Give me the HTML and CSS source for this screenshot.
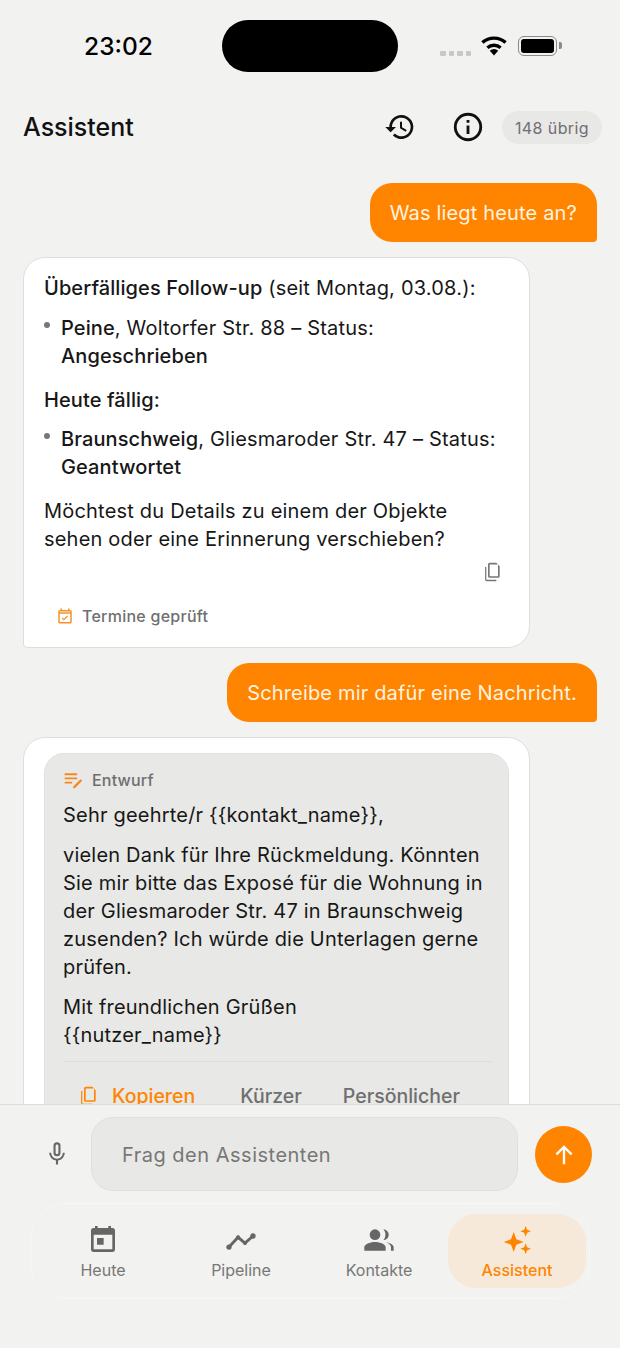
FILE: index.html
```html
<!DOCTYPE html>
<html lang="de">
<head>
  <meta charset="UTF-8">
  <meta name="viewport" content="width=device-width, initial-scale=1">
  <title>Assistent</title>
  <link rel="stylesheet" href="styles.css">
</head>
<body>

<div class="screen">
  <div class="status-bar">
    <span class="clock">23:02</span>
    <div class="island"></div>
    <div class="status-icons">
      <div class="signal"><i></i><i></i><i></i><i></i></div>
      <svg class="wifi" width="28" height="20" viewBox="0 0 28 20"><path d="M14 19.500l-4.200-4.800a6.200 6.200 0 0 1 8.400 0z" fill="#000"/><path d="M7.400 11.700a10 10 0 0 1 13.200 0M2.400 6.600a17.200 17.200 0 0 1 23.200 0" fill="none" stroke="#000" stroke-width="3.400"/></svg>
      <div class="battery"><div class="battery-fill"></div></div>
    </div>
  </div>

  <div class="top-bar">
    <h1>Assistent</h1>
    <svg class="top-icon history" width="32" height="32" viewBox="0 0 24 24"><path d="M13 3a9 9 0 0 0-9 9H1l3.900 3.900.1.100 4-4H6a7 7 0 1 1 2.050 4.950l-1.420 1.420A9 9 0 1 0 13 3zm-1 5v5l4.250 2.520.77-1.280-3.520-2.090V8z" fill="#111"/></svg>
    <svg class="top-icon info" width="34" height="34" viewBox="0 0 24 24"><path d="M11 7h2v2h-2zm0 4h2v6h-2zm1-9a10 10 0 1 0 0 20 10 10 0 0 0 0-20zm0 18a8 8 0 1 1 0-16 8 8 0 0 1 0 16z" fill="#111"/></svg>
    <span class="quota">148 übrig</span>
  </div>

  <div class="chat">
    <div class="msg-user">Was liegt heute an?</div>

    <div class="msg-bot">
      <p><b>Überfälliges Follow-up</b> (seit Montag, 03.08.):</p>
      <ul>
        <li><b>Peine</b>, Woltorfer Str. 88 – Status: <b>Angeschrieben</b></li>
      </ul>
      <p class="tight"><b>Heute fällig:</b></p>
      <ul>
        <li><b>Braunschweig</b>, Gliesmaroder Str. 47 – Status: <b>Geantwortet</b></li>
      </ul>
      <p class="last">Möchtest du Details zu einem der Objekte sehen oder eine Erinnerung verschieben?</p>
      <div class="copy-row">
        <svg width="20" height="20" viewBox="0 0 24 24"><path d="M16 1H8a2 2 0 0 0-2 2v14a2 2 0 0 0 2 2h10a2 2 0 0 0 2-2V5zm2 16H8V3h10zM4 6H2.500v15a2 2 0 0 0 2 2H16v-1.600H4.500a.5.5 0 0 1-.5-.5z" fill="#777"/></svg>
      </div>
      <div class="tool-note">
        <svg width="18" height="18" viewBox="0 0 24 24"><path d="M19 4h-1V2h-2v2H8V2H6v2H5a2 2 0 0 0-2 2v14a2 2 0 0 0 2 2h14a2 2 0 0 0 2-2V6a2 2 0 0 0-2-2zm0 16H5V9h14zm0-13H5V6h14zm-8.500 11l-3-3 1.100-1.100 1.900 1.900 4.400-4.400 1.100 1.100z" fill="#f5922a"/></svg>
        Termine geprüft
      </div>
    </div>

    <div class="msg-user">Schreibe mir dafür eine Nachricht.</div>

    <div class="msg-bot msg-draft">
      <div class="draft">
        <div class="draft-head">
          <svg width="20" height="20" viewBox="0 0 24 24"><path d="M2 4h15v2.200H2zm0 5h15v2.200H2zm0 5h9v2.200H2zM21 11l2 2-8.500 8.500-2.500.5.500-2.500z" fill="#f5881f"/></svg>
          Entwurf
        </div>
        <p>Sehr geehrte/r {{kontakt_name}},</p>
        <p>vielen Dank für Ihre Rückmeldung. Könnten Sie mir bitte das Exposé für die Wohnung in der Gliesmaroder Str. 47 in Braunschweig zusenden? Ich würde die Unterlagen gerne prüfen.</p>
        <p>Mit freundlichen Grüßen<br>{{nutzer_name}}</p>
        <div class="draft-actions">
          <span class="action action-on">
            <svg width="20" height="20" viewBox="0 0 24 24"><path d="M16 1H8a2 2 0 0 0-2 2v14a2 2 0 0 0 2 2h10a2 2 0 0 0 2-2V5zm2 16H8V3h10zM4 6H2.500v15a2 2 0 0 0 2 2H16v-1.600H4.500a.5.5 0 0 1-.5-.5z" fill="#ff8500"/></svg>
            Kopieren
          </span>
          <span class="action">Kürzer</span>
          <span class="action">Persönlicher</span>
        </div>
      </div>
    </div>
  </div>

  <div class="composer">
    <svg class="mic" width="28" height="28" viewBox="0 0 24 24"><path d="M12 14a3 3 0 0 0 3-3V5a3 3 0 0 0-6 0v6a3 3 0 0 0 3 3zm-1.200-9a1.200 1.200 0 0 1 2.400 0v6a1.200 1.200 0 0 1-2.400 0zM17 11a5 5 0 0 1-10 0H5.300a6.700 6.700 0 0 0 5.800 6.600V21h1.800v-3.400A6.700 6.700 0 0 0 18.700 11z" fill="#666"/></svg>
    <div class="composer-input">Frag den Assistenten</div>
    <div class="send">
      <svg width="28" height="28" viewBox="0 0 24 24"><path d="M12 20V5M5.500 11.500L12 5l6.500 6.500" fill="none" stroke="#fff" stroke-width="2"/></svg>
    </div>
  </div>

  <div class="tab-wrap">
    <nav class="tabs">
      <div class="tab">
        <svg width="32" height="32" viewBox="0 0 24 24"><path d="M19 3h-1V1.500h-2V3H8V1.500H6V3H5a2 2 0 0 0-2 2v14a2 2 0 0 0 2 2h14a2 2 0 0 0 2-2V5a2 2 0 0 0-2-2zm0 16H5V8h14zM7.500 10.500h5v5h-5z" fill="#666"/></svg>
        <span>Heute</span>
      </div>
      <div class="tab">
        <svg width="32" height="32" viewBox="0 0 24 24"><path d="M3 17.300l6.800-7.300 5.200 4.300L21 9" fill="none" stroke="#666" stroke-width="2.200"/><circle cx="3" cy="17.300" r="2" fill="#666"/><circle cx="9.800" cy="10" r="1.500" fill="#666"/><circle cx="15" cy="14.300" r="1.500" fill="#666"/><circle cx="21" cy="9" r="2" fill="#666"/></svg>
        <span>Pipeline</span>
      </div>
      <div class="tab">
        <svg width="32" height="32" viewBox="0 0 24 24"><circle cx="9" cy="8" r="4" fill="#666"/><path d="M1 20v-2.500C1 14.800 6.300 13.500 9 13.500s8 1.300 8 4V20z" fill="#666"/><path d="M15.300 12a4 4 0 0 0 0-8 6 6 0 0 1 0 8zM17.500 13.700c2 .9 3.500 2.200 3.500 3.800V20h2v-2.500c0-2-3-3.400-5.500-3.800z" fill="#666"/></svg>
        <span>Kontakte</span>
      </div>
      <div class="tab tab-on">
        <svg width="32" height="32" viewBox="0 0 24 24"><path d="M9.500 6l2 5.500 5.500 2-5.500 2-2 5.500-2-5.500-5.500-2 5.500-2zM18.500 1.500l1.100 2.900 2.900 1.100-2.900 1.100-1.100 2.900-1.100-2.900-2.900-1.100 2.900-1.100zM18.500 14.500l1.100 2.900 2.900 1.100-2.900 1.100-1.100 2.900-1.100-2.900-2.900-1.100 2.900-1.100z" fill="#ff8500"/></svg>
        <span>Assistent</span>
      </div>
    </nav>
  </div>
</div>

</body>
</html>
```

FILE: styles.css
```css
* {
  box-sizing: border-box;
}
body {
  margin: 0;
  background: #f2f2f0;
  font-family: Inter, "Noto Sans", sans-serif;
  color: #171717;
}
.screen {
  width: 620px;
  height: 1348px;
  display: flex;
  flex-direction: column;
  overflow: hidden;
}

/* status bar */
.status-bar {
  height: 92px;
  flex: none;
  display: flex;
  align-items: flex-start;
  padding-top: 20px;
}
.clock {
  width: 222px;
  padding-left: 15px;
  text-align: center;
  font-size: 24.500px;
  font-weight: 500;
  line-height: 52px;
  color: #000;
}
.island {
  width: 176px;
  height: 52px;
  border-radius: 26px;
  background: #000;
}
.status-icons {
  display: flex;
  align-items: center;
  height: 52px;
  padding-left: 42px;
}
.signal {
  display: flex;
  gap: 3px;
  margin-top: 14px;
  margin-right: 9px;
}
.signal i {
  width: 5.500px;
  height: 5px;
  border-radius: 1px;
  background: #c8c8c8;
}
.wifi {
  margin-right: 10px;
  margin-top: -1px;
}
.battery {
  position: relative;
  width: 39px;
  height: 20px;
  border: 1.500px solid #8a8a8a;
  border-radius: 6px;
  padding: 2px;
  margin-top: -1px;
}
.battery::after {
  content: "";
  position: absolute;
  right: -6px;
  top: 5px;
  width: 3px;
  height: 7px;
  background: #8a8a8a;
  border-radius: 0 2px 2px 0;
}
.battery-fill {
  height: 100%;
  background: #000;
  border-radius: 3px;
}

/* header */
.top-bar {
  height: 70px;
  flex: none;
  display: flex;
  align-items: center;
  padding: 0 18px 0 23px;
}
.top-bar h1 {
  flex: 1;
  margin: 0;
  font-size: 25px;
  font-weight: 500;
  color: #111;
}
.top-icon {
  flex: none;
}
.history {
  margin-right: 35px;
}
.info {
  margin-right: 17px;
}
.quota {
  height: 33px;
  padding: 0 13px;
  border-radius: 17px;
  background: #e8e8e6;
  font-size: 16px;
  letter-spacing: 0.4px;
  line-height: 34px;
  color: #6f6f6f;
}

/* chat */
.chat {
  height: 942px;
  flex: none;
  display: flex;
  flex-direction: column;
  align-items: flex-start;
  gap: 15px;
  padding: 21px 23px 0;
  overflow: hidden;
}
.msg-user {
  flex: none;
  align-self: flex-end;
  height: 59px;
  padding: 0 20px;
  background: #ff8500;
  border-radius: 22px 22px 4px 22px;
  font-size: 20px;
  letter-spacing: 0.17px;
  line-height: 60px;
  color: #fff3e0;
}
.msg-bot {
  flex: none;
  width: 507px;
  padding: 16px 20px 19px;
  background: #fff;
  border: 1px solid #dedede;
  border-radius: 22px 22px 22px 4px;
  font-size: 20px;
  letter-spacing: 0.2px;
  line-height: 28px;
}
.msg-draft {
  padding-top: 15px;
}
.msg-bot p {
  margin: 0 0 12px;
}
.msg-bot p.tight {
  margin-bottom: 11px;
}
.msg-bot p.last {
  margin: 0;
}
.msg-bot b {
  font-weight: 500;
  letter-spacing: 0.1px;
}
.msg-bot ul {
  margin: 0 0 16px;
  padding: 0 0 0 17px;
  list-style: none;
}
.msg-bot li {
  position: relative;
}
.msg-bot li::before {
  content: "";
  position: absolute;
  left: -17px;
  top: 8px;
  width: 6px;
  height: 6px;
  border-radius: 50%;
  background: #777;
}
.copy-row {
  display: flex;
  justify-content: flex-end;
  margin-top: 9px;
  padding-right: 6px;
  height: 20px;
}
.tool-note {
  display: flex;
  align-items: center;
  gap: 8px;
  margin-top: 22px;
  padding-left: 12px;
  font-size: 16px;
  letter-spacing: 0.25px;
  line-height: 24px;
  font-weight: 500;
  color: #6f6f6f;
}

/* draft */
.draft {
  padding: 12px 17px 0 18px;
  background: #e8e8e6;
  border: 1px solid #e0e0de;
  border-radius: 20px;
}
.draft-head {
  display: flex;
  align-items: center;
  gap: 9px;
  height: 28px;
  margin-bottom: 7px;
  font-size: 16px;
  font-weight: 500;
  color: #6f6f6f;
}
.draft-actions {
  display: flex;
  align-items: center;
  gap: 41px;
  height: 68px;
  padding: 0 0 0 16px;
  border-top: 1px solid #dcdcda;
  font-size: 19.500px;
  font-weight: 500;
  color: #6f6f6f;
  letter-spacing: 0;
}
.action {
  display: flex;
  align-items: center;
  gap: 13px;
}
.action-on {
  margin-right: 4px;
  color: #ff8500;
}

/* composer */
.composer {
  position: relative;
  height: 99px;
  flex: none;
  display: flex;
  align-items: flex-start;
  padding: 12px 28px 0 43px;
  background: #f2f2f0;
  border-top: 1px solid #dcdcda;
}
.mic {
  margin-top: 23px;
  margin-right: 20px;
}
.composer-input {
  flex: 1;
  height: 74px;
  padding-left: 30px;
  background: #e8e8e6;
  border: 1px solid #e0e0de;
  border-radius: 22px;
  font-size: 20px;
  line-height: 74px;
  color: #777;
  letter-spacing: 0.5px;
}
.send {
  width: 57px;
  height: 57px;
  margin: 9px 0 0 17px;
  display: flex;
  align-items: center;
  justify-content: center;
  border-radius: 50%;
  background: #ff8500;
}

/* bottom tabs */
.tab-wrap {
  padding: 0 30px;
}
.tabs {
  display: flex;
  height: 96px;
  padding: 10px 3px;
  border: 1px solid #f7f7f5;
  border-radius: 36px;
}
.tab {
  flex: 1;
  display: flex;
  flex-direction: column;
  align-items: center;
  padding-top: 10px;
  font-size: 16px;
  font-weight: 400;
  line-height: 20px;
  color: #777;
  border-radius: 28px;
}
.tab svg {
  margin-bottom: 4px;
}
.tab-on {
  background: #f6e9d9;
  color: #ff8500;
  font-weight: 500;
}
```
